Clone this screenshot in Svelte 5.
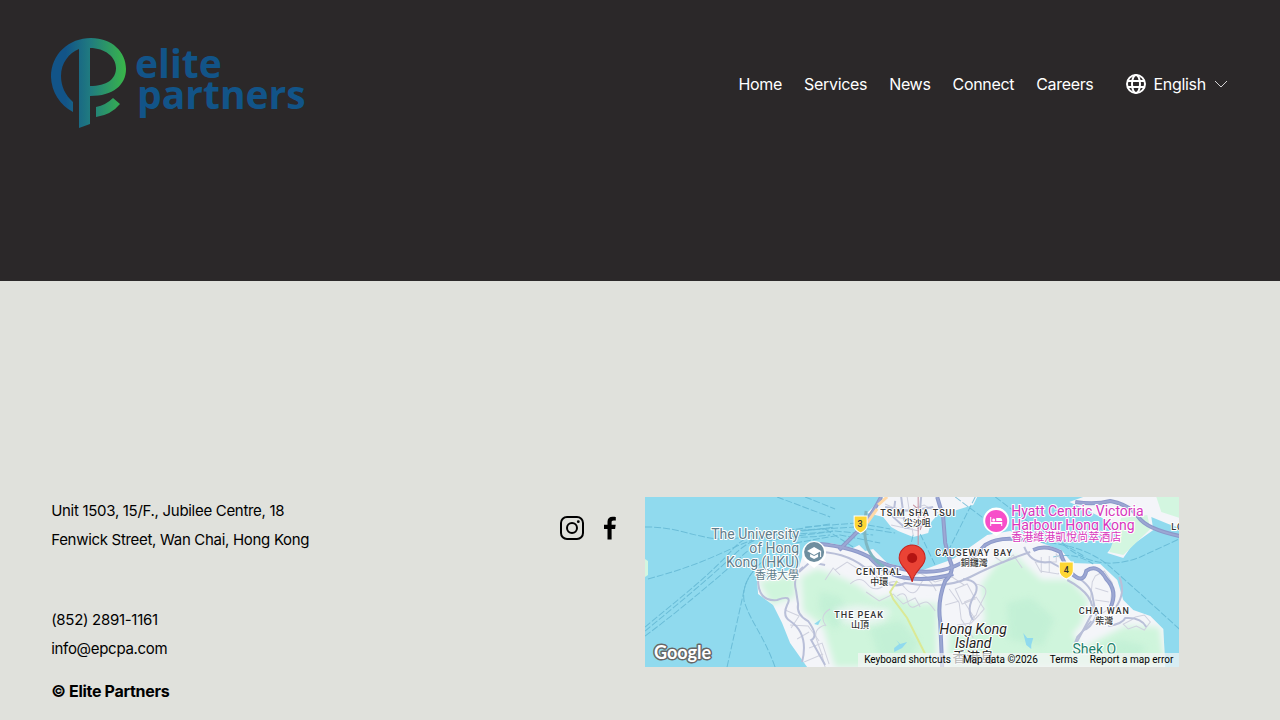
<script lang="ts">
  const links = ['Home', 'Services', 'News', 'Connect', 'Careers'];

  // Ferry lanes across the harbour and the open sea
  const ferries = [
    'M0 30 C30 30 45 38 65 41 S100 40 185 27',
    'M3 82 C40 72 60 64 90 50 S150 35 185 31',
    'M0 130 C30 105 65 78 88 52 S140 38 190 30',
    'M0 134 C33 107 68 78 92 55 S145 40 188 34',
    'M0 139 C35 113 74 80 98 58 S150 43 185 38',
    'M82 170 L98 98 Q101 76 121 62',
    'M130 170 C118 137 106 126 99 104 Q96 84 116 66',
    'M132 0 L185 20',
    'M160 0 L190 12',
    'M145 40 L190 34 L228 38',
    'M150 46 L195 38 L235 46',
    'M150 34 L210 30 L250 36',
    'M160 30 L212 26 L245 32',
    'M268 38 L260 70',
    'M275 37 L290 68',
    'M180 32 L208 50',
    'M310 0 L350 30 M330 0 L300 60',
    'M395 45 Q440 48 465 70 T534 132',
    'M405 35 Q445 80 495 60 L534 42',
    'M408 60 Q430 55 448 67',
    'M350 0 L390 30 L440 60'
  ];

  const motorways = [
    'M175 47 Q205 50 222 59 T250 70 Q285 80 310 69 Q330 61 340 48 Q355 38 385 44',
    'M236 0 Q228 16 215 32 L194 53',
    'M292 0 L298 20 L300 46 L305 64 Q310 74 300 84 Q292 104 295 124 L297 170',
    'M388 53 Q400 47 415 55 Q418 66 426 76 Q438 88 441 74 Q452 66 461 82 Q473 94 465 111',
    'M430 5 Q450 8 465 4 Q485 8 493 20 T534 39',
    'M225 61 Q240 78 262 81 Q285 84 308 77'
  ];

  const roads = [
    'M175 55 Q205 56 225 75 T260 86 Q300 93 325 80 T385 55',
    'M113 80 Q112 105 132 103 Q148 97 142 108 Q137 119 145 124 Q164 137 157 165',
    'M158 70 Q147 79 151 94 L153 107 Q151 118 163 124 Q174 139 166 143 L180 168',
    'M154 75 L165 65 L180 68',
    'M318 82 Q336 84 330 97 Q320 112 328 123',
    'M379 50 Q386 68 405 65 L425 76 Q445 87 447 98 L451 119 Q445 132 438 133',
    'M422 83 Q452 99 446 118 L430 148',
    'M474 80 Q481 96 470 111',
    'M463 129 Q477 127 480 121 Q496 120 501 130',
    'M428 150 L432 140 Q440 132 446 124',
    'M250 4 L248 20 L260 31 L280 28',
    'M240 10 L265 14 L288 10',
    'M256 0 L260 30 M276 0 L273 32'
  ];

  const streets = [
    'M190 73 l12 -8 11 7 13 -3 9 10 14 -4 10 8 16 -7 15 9 17 -5 12 8',
    'M205 87 q10 -9 17 0 t18 1 t20 3 t15 -3 t16 6',
    'M180 83 l8 -12 7 7 M221 95 l13 9 14 -7 10 10 12 -6 5 9',
    'M252 99 q8 -6 10 4 t9 6 t10 -4 t9 9',
    'M310 92 l12 -5 8 15 -13 5z M319 105 l12 -5 8 12 -9 10 -11 -17',
    'M304 92 l10 14 2 16 8 12 M300 108 l14 -4 M312 128 l14 -2 8 -8',
    'M390 65 h21 v-8 l11 12 -9 8 -18 -3z M396 60 v16 M404 59 v16',
    'M450 79 l9 -5 8 12 -2 25 -12 8 -8 -14 2 -20z M450 91 l13 4 M450 103 l14 2',
    'M140 113 l14 6 -8 12 M145 128 l18 1 11 15 M152 142 l12 -7',
    'M164 151 l13 -5 7 21 M159 165 l19 -8',
    'M240 7 l18 8 21 -7 14 8 M248 20 l30 4 M246 28 l28 6 M262 0 l6 38',
    'M490 120 l9 -2 6 7 -6 8 -8 -4 -8 3 -5 -5 8 -4z',
    'M180 128 q-13 4 -8 16 t8 26 M185 112 q-12 7 -4 17',
    'M330 87 q15 2 9 13 t-8 18 q-12 9 -3 23 M350 60 l8 6 10 -8 9 13'
  ];
</script>

<svelte:head>
  <title>Elite Partners</title>
</svelte:head>

<div class="site">
  <header class="header">
    <a class="logo" href="/" aria-label="Elite Partners">
      <svg width="256" height="90" viewBox="0 0 256 90">
        <defs>
          <linearGradient id="mark" gradientUnits="userSpaceOnUse" x1="4" y1="0" x2="74" y2="0">
            <stop offset="0.15" stop-color="#125488" />
            <stop offset="0.5" stop-color="#207b80" />
            <stop offset="1" stop-color="#39b54a" />
          </linearGradient>
        </defs>
        <g fill="url(#mark)">
          <path d="M22 74 A41 41 0 0 1 0 39 C0 16 18 0 40 0 C61 0 75 14 75 31 C75 47 62 58 39 58 V86 L28 90 V11 C18 15 10 25 10 38 C10 48 14 57 22 64Z M39 10 V48 C56 48 65 41 65 30 C65 19 54 10 39 10Z" fill-rule="evenodd" />
          <path d="M45 69 Q55 67 62 60 L69 66 Q60 77 45 79Z" />
        </g>
        <text class="wordmark" x="84" y="40">elite</text>
        <text class="wordmark" x="86" y="71">partners</text>
      </svg>
    </a>

    <nav class="nav">
      {#each links as link}
        <a href="/{link.toLowerCase()}">{link}</a>
      {/each}
      <button type="button" class="language">
        <svg class="globe" width="20" height="20" viewBox="0 0 20 20" fill="none" stroke="currentColor" stroke-width="2">
          <circle cx="10" cy="10" r="9" />
          <ellipse cx="10" cy="10" rx="4" ry="9" />
          <path d="M1 7h18M1 13h18" />
        </svg>
        English
        <svg class="chevron" width="12" height="8" viewBox="0 0 12 8" fill="none" stroke="currentColor" stroke-width="0.8">
          <path d="M0 1l6 6 6-6" />
        </svg>
      </button>
    </nav>
  </header>

  <footer class="footer">
    <div class="contact">
      <address>Unit 1503, 15/F., Jubilee Centre, 18<br />Fenwick Street, Wan Chai, Hong Kong</address>
      <p>(852) 2891-1161<br /><a href="mailto:info@epcpa.com">info@epcpa.com</a></p>
      <p class="copyright">© Elite Partners</p>
    </div>

    <div class="social">
      <a href="/instagram" aria-label="Instagram">
        <svg width="24" height="24" viewBox="0 0 24 24" fill="none" stroke="currentColor" stroke-width="2">
          <rect x="1" y="1" width="22" height="22" rx="6" />
          <circle cx="12" cy="12" r="5" />
          <circle cx="18.3" cy="5.7" r="1.4" fill="currentColor" stroke="none" />
        </svg>
      </a>
      <a href="/facebook" aria-label="Facebook">
        <svg width="24" height="24" viewBox="0 0 24 24" fill="currentColor">
          <path d="M9.500 23.500V13H6V8.700h3.500V5.800C9.500 2.400 11.500.7 14.600.7c1.500 0 2.800.1 3.200.2v3.600h-2.200c-1.600 0-2 .8-2 2v2.200h4.100l-.6 4.300h-3.500v10.500z" />
        </svg>
      </a>
    </div>

    <div class="map">
      <svg class="map-canvas" viewBox="0 0 534 170" preserveAspectRatio="xMidYMid slice">
        <defs>
          <filter id="soft" x="-20%" y="-20%" width="140%" height="140%">
            <feGaussianBlur stdDeviation="3" />
          </filter>
          <clipPath id="island">
            <path d="M112 83 L154 70 L160 50 L185 46 L208 51 L214 48 L220 54 L228 52 L242 66 L275 74 L308 62 L325 50 L342 38 L365 34 L388 43 L416 53 L427 66 L455 67 L472 83 L478 103 L488 113 L505 119 L518 132 L520 170 H162 L145 146 L137 126 L128 108 L113 97Z" />
          </clipPath>
        </defs>

        <rect width="534" height="170" fill="#90daee" />
        <path fill="#f4f5f9" d="M238 0 L222 16 L238 20 L246 30 L253 34 L268 40 L283 36 L286 25 L296 14 L302 16 L328 8 L332 0Z M438 0 L424 5 L442 13 L468 27 L473 42 L462 56 L478 61 L487 48 L508 33 L506 20 L523 27 L534 31 V0Z" />
        <path fill="#d3f6e0" d="M476 21 L502 18 L505 32 L478 58 L464 55Z M511 0 H534 V21 L516 15Z M0 62 l3 2 v14 l-3 2z" />

        <g clip-path="url(#island)">
          <rect width="534" height="170" fill="#f4f5f9" />
          <g fill="#cff5dc" filter="url(#soft)">
            <path d="M114 84 L151 78 L150 100 L126 108Z" />
            <path d="M156 80 L172 72 L190 78 L212 88 L232 102 L248 98 L270 107 L292 106 L291 170 H190 L178 130 L158 114Z" />
            <path d="M336 88 L352 66 L370 58 L382 70 L396 83 L425 83 L443 103 L436 127 L427 137 L437 151 L462 138 L480 129 L514 130 L520 170 H302 L305 130 L322 140 L340 124Z" />
          </g>
          <g fill="#b8ecd0" opacity="0.5" filter="url(#soft)">
            <path d="M175 95 l20 5 8 20 -14 12 -15 -20z M225 132 l30 -8 18 21 -9 18 -30 -3z M362 106 l24 -5 23 21 -12 27 -33 -7z M455 150 l22 -7 25 7 -15 14z" />
          </g>
          <path d="M188 112 l24 -4 34 4 -6 12 -24 6 -18 -4z" fill="#f4f5f9" opacity="0.7" filter="url(#soft)" />
          <path d="M249 151 l5 -4 -3 -4 4 4 7 -2 -5 6 -8 4z M169 127 l7 -5 -3 6z M378 136 l4 5 6 0 -2 7 0 4 -5 -4z" fill="#90daee" />
        </g>

        <g fill="none" stroke="#5eb3d0" stroke-width="1" stroke-dasharray="7 2" opacity="0.75">
          {#each ferries as d}
            <path {d} />
          {/each}
        </g>
        <g fill="none" stroke="#cfd1de" stroke-width="1">
          {#each streets as d}
            <path {d} />
          {/each}
        </g>
        <g fill="none" stroke="#b9bfd8" stroke-width="2">
          {#each roads as d}
            <path {d} />
          {/each}
        </g>
        <g fill="none" stroke="#8b98c9" stroke-width="4">
          {#each motorways as d}
            <path {d} />
          {/each}
        </g>
        <g fill="none" stroke="#9ca7d3" stroke-width="2">
          {#each motorways as d}
            <path {d} />
          {/each}
        </g>
        <path d="M221 14 Q218 32 221 46 T239 70" fill="none" stroke="#7fb6c1" stroke-width="3" />
        <path d="M273 0 V48 M268 8 l12 10 -5 15" fill="none" stroke="#c58f9c" stroke-width="1" />
        <path d="M233 8 L242 0 M222 26 L232 12" fill="none" stroke="#ffd9a8" stroke-width="3" />
        <path d="M252 84 l-7 11 3 7 14 19 18 36" fill="none" stroke="#dbe995" stroke-width="2" />

        <g class="uni" text-anchor="end">
          <text x="154" y="42">The University</text>
          <text x="154" y="56">of Hong</text>
          <text x="154" y="70">Kong (HKU)</text>
          <text class="small" x="154" y="82">香港大學</text>
        </g>
        <g class="hotel">
          <text x="366" y="19">Hyatt Centric Victoria</text>
          <text x="366" y="33">Harbour Hong Kong</text>
          <text class="small" x="366" y="44">香港維港凱悅尚萃酒店</text>
        </g>
        <g class="district" text-anchor="middle">
          <text x="273" y="19">TSIM SHA TSUI</text>
          <text class="han" x="272" y="29">尖沙咀</text>
          <text x="329" y="59">CAUSEWAY BAY</text>
          <text class="han" x="329" y="69">銅鑼灣</text>
          <text x="234" y="78">CENTRAL</text>
          <text class="han" x="234" y="88">中環</text>
          <text x="214" y="121">THE PEAK</text>
          <text class="han" x="215" y="131">山頂</text>
          <text x="459" y="117">CHAI WAN</text>
          <text class="han" x="459" y="127">柴灣</text>
        </g>
        <text class="district" x="526" y="33">LO</text>
        <g class="area" text-anchor="middle">
          <text x="328" y="137">Hong Kong</text>
          <text x="328" y="151">Island</text>
          <text class="area-han" x="328" y="165">香港島</text>
        </g>
        <text class="park" x="449" y="157" text-anchor="middle">Shek O</text>

        <g stroke="#fff" stroke-width="1">
          <path d="M209 19 h13 v9 q0 5 -6.500 8 q-6.500 -3 -6.500 -8z" fill="#fdd633" />
          <path d="M414 65 h14 v9 q0 5 -7 8 q-7 -3 -7 -8z" fill="#fdd633" />
        </g>
        <g class="route" text-anchor="middle">
          <text x="215" y="30">3</text>
          <text x="421" y="76">4</text>
        </g>

        <path d="M169 71 L160 64 A12 12 0 1 1 178 64Z" fill="#fff" />
        <circle cx="169" cy="55" r="10" fill="#6e8e9f" />
        <path d="M162 54 L169 50 L176 54 L169 58Z M165 57 v3 l4 2 4 -2 v-3 l-4 2z M175 54 h1 v6 h-1z" fill="#fff" />
        <path d="M351 39 L342 33 A13 13 0 1 1 360 33Z" fill="#fff" />
        <circle cx="351" cy="24" r="11" fill="#f74fc9" />
        <path d="M345 20 h1 v5 h11 v4 h-1 v-2 h-10 v2 h-1z M347 23 a1.500 1.500 0 1 1 3 0 a1.500 1.500 0 1 1 -3 0z M351 21 h4 q2 0 2 3 h-6z" fill="#fff" />

        <path d="M267 85 C265 73 254 70 254 61 A13 13 0 0 1 280 61 C280 70 269 73 267 85Z" fill="#ea4335" stroke="#c5221f" stroke-width="1" />
        <circle cx="267" cy="61" r="5" fill="#b31412" />
        <text class="google" x="9" y="162">Google</text>
      </svg>
      <div class="map-legal">
        <button type="button">Keyboard shortcuts</button>
        <span>Map data ©2026</span>
        <a href="/terms">Terms</a>
        <a href="/report">Report a map error</a>
      </div>
    </div>
  </footer>
</div>

<style>
  :global(body) {
    background: #e0e1dc;
  }

  .site {
    font-family: Inter, sans-serif;
    font-size: 15px;
    color: #000;
  }

  a {
    color: inherit;
    text-decoration: none;
  }

  button {
    padding: 0;
    border: 0;
    background: none;
    color: inherit;
    font: inherit;
    cursor: pointer;
  }

  svg {
    display: block;
  }

  .header {
    display: flex;
    align-items: flex-start;
    justify-content: space-between;
    padding: 38px 4vw 151px;
    background: #2b2829;
    color: #fff;
  }

  .logo svg {
    overflow: visible;
  }

  .wordmark {
    fill: #125488;
    font-family: 'Open Sans', sans-serif;
    font-size: 39px;
    font-weight: 700;
  }

  .nav {
    display: flex;
    align-items: center;
    gap: 22px;
    height: 92px;
    font-size: 16px;
    letter-spacing: -0.02em;
  }

  .language {
    display: flex;
    align-items: center;
    gap: 8px;
    margin-left: 10px;
    letter-spacing: inherit;
  }

  .chevron {
    margin: 0 2px 0 1px;
  }

  .footer {
    display: grid;
    grid-template-columns: repeat(24, 1fr);
    column-gap: 10px;
    align-items: start;
    padding: 215px 4vw 14px;
  }

  .contact {
    grid-column: 1 / 11;
    line-height: 29px;
    letter-spacing: -0.02em;
  }

  address {
    margin-bottom: 51px;
    font-style: normal;
  }

  p {
    margin: 0;
  }

  .copyright {
    margin-top: 14px;
    font-size: 16px;
    font-weight: 700;
  }

  .social {
    grid-column: 11 / 13;
    display: flex;
    justify-content: center;
    gap: 14px;
    padding-top: 20px;
  }

  .map {
    grid-column: 13 / 24;
    position: relative;
    height: 170px;
    margin-top: 1px;
    overflow: hidden;
    font-family: Roboto, 'Noto Sans CJK TC', sans-serif;
  }

  .map-canvas {
    width: 100%;
    height: 100%;
  }

  .map text {
    paint-order: stroke;
    stroke: #fff;
    stroke-width: 2px;
    stroke-linejoin: round;
  }

  .uni,
  .hotel {
    font-size: 14px;
  }

  .uni {
    fill: #607d8b;
  }

  .hotel {
    fill: #d737bd;
  }

  .small {
    font-size: 11px;
  }

  .district {
    fill: #333;
    font-size: 9px;
    font-weight: 500;
    letter-spacing: 1px;
  }

  .han {
    font-size: 9px;
    letter-spacing: 0;
  }

  .area {
    fill: #222;
    font-size: 14px;
    font-style: italic;
  }

  .area-han {
    font-style: normal;
  }

  .park {
    fill: #22826b;
    font-size: 14px;
  }

  .map .route text {
    fill: #333;
    stroke: none;
    font-size: 9px;
    font-weight: 500;
  }

  .map .google {
    fill: #fff;
    stroke: #666;
    stroke-width: 3px;
    font-family: Lato, sans-serif;
    font-size: 18px;
    font-weight: 700;
  }

  .map-legal {
    position: absolute;
    right: 0;
    bottom: 0;
    display: flex;
    gap: 12px;
    padding: 0 6px;
    background: rgb(245 245 245 / 70%);
    font-size: 10px;
    line-height: 14px;
  }
</style>
